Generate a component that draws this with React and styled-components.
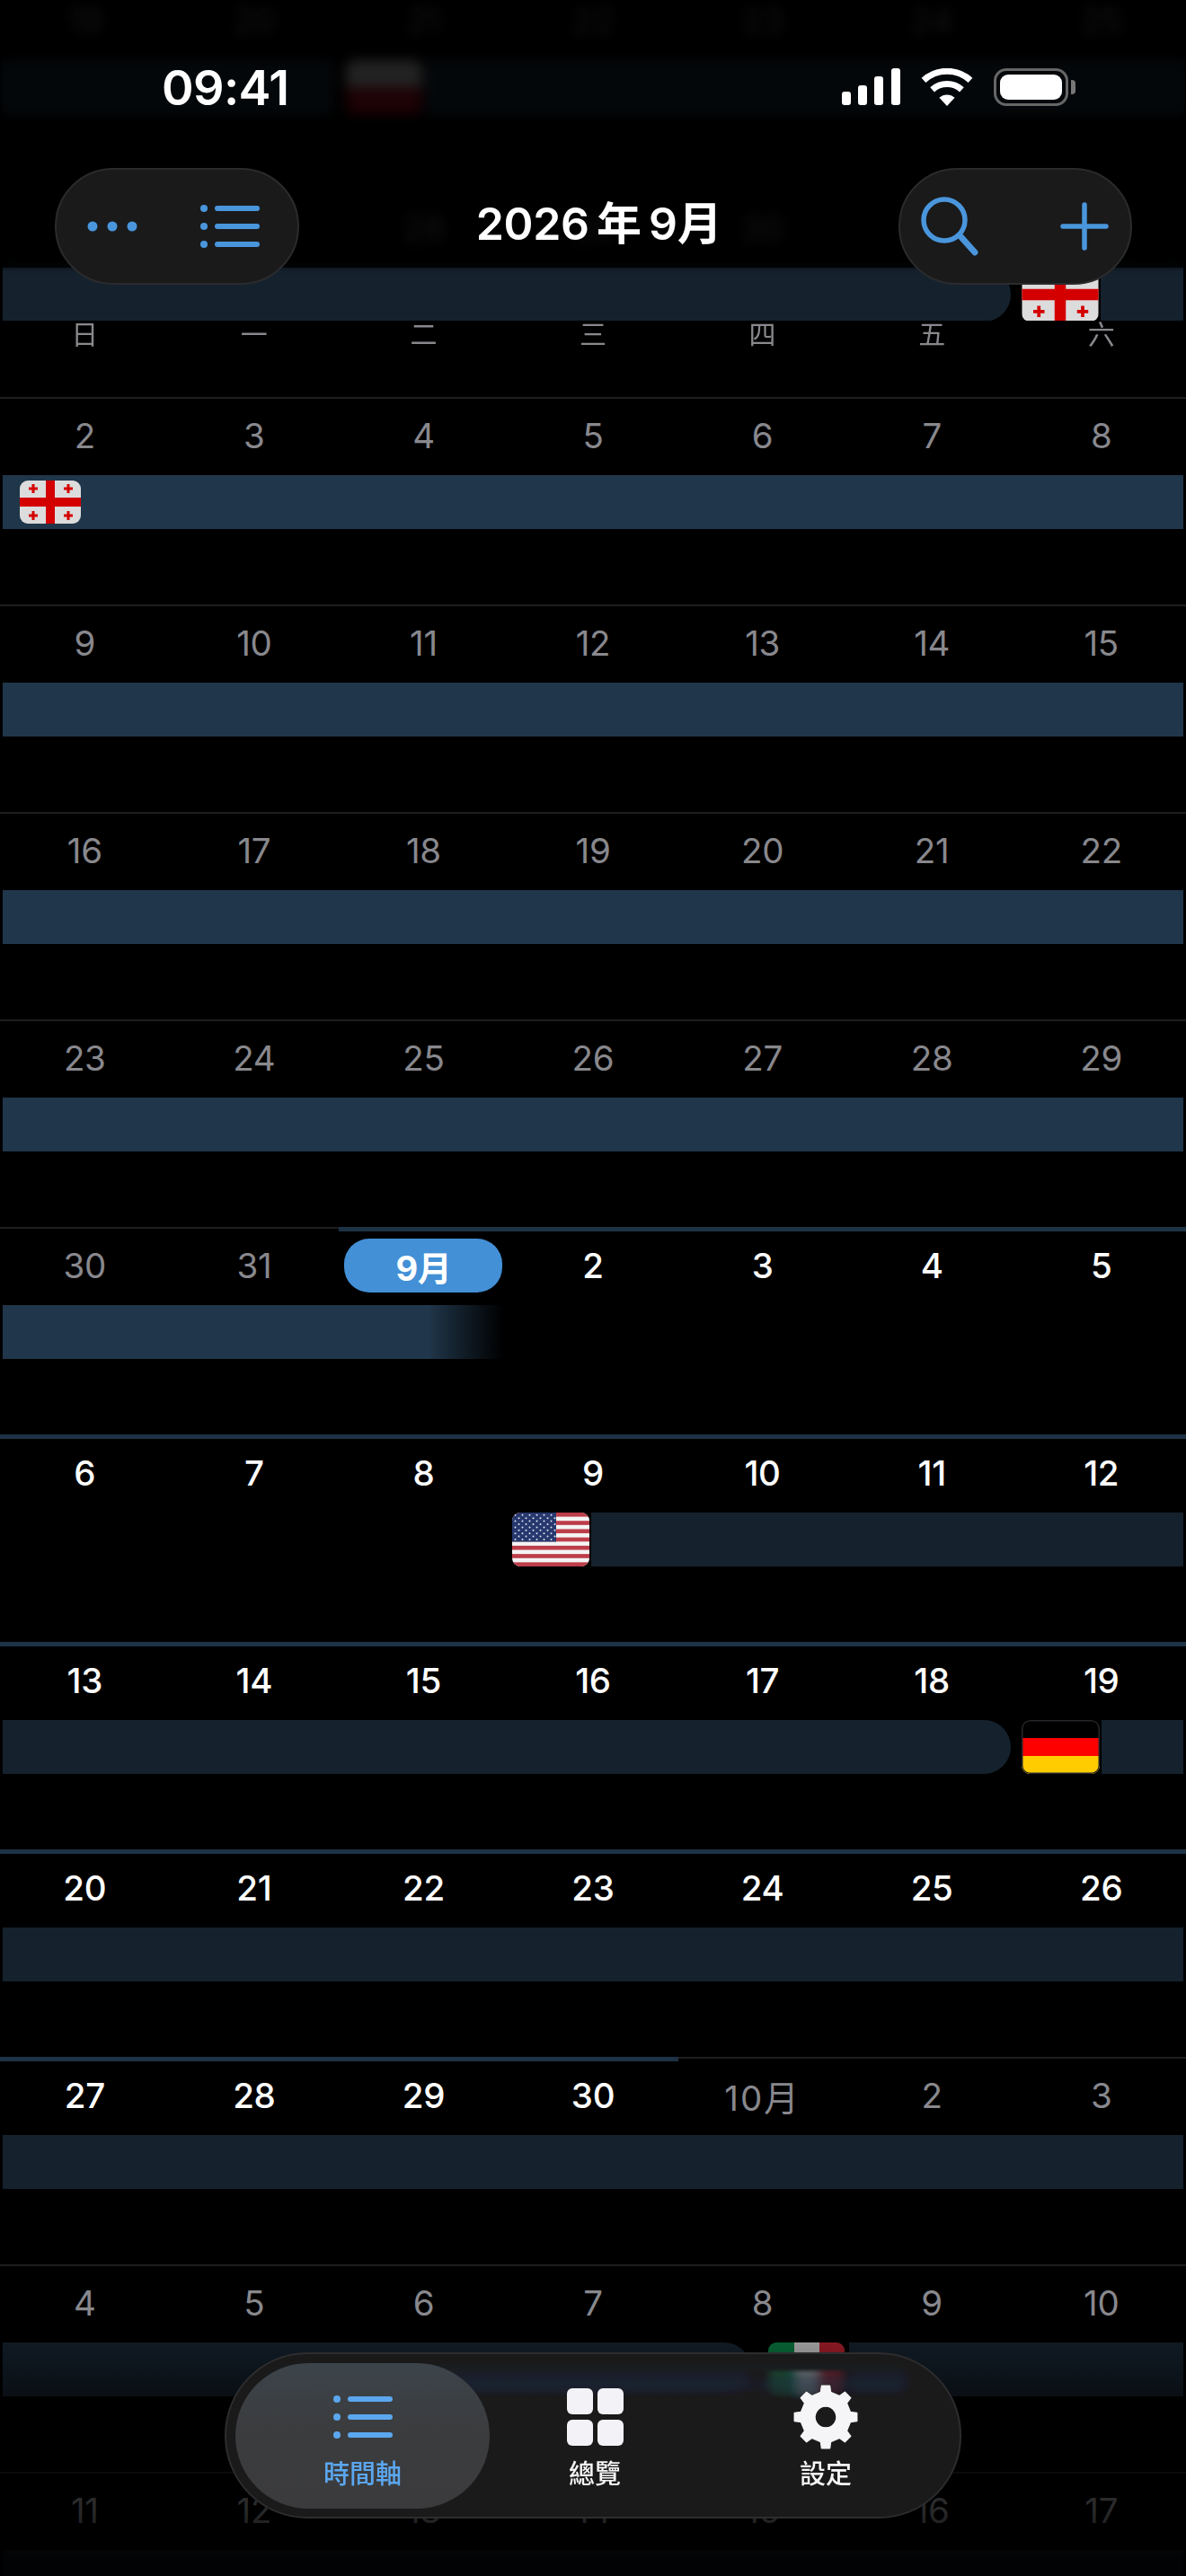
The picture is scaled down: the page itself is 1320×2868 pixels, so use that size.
import React from 'react';
import styled, { createGlobalStyle } from 'styled-components';

const GlobalStyle = createGlobalStyle`
  html, body {
    margin: 0;
    background: #000;
    font-family: Inter, "Noto Sans CJK TC", sans-serif;
  }
`

const Screen = styled.div`
  position: relative;
  width: 1320px;
  height: 2868px;
  overflow: hidden;
  background: #000;
`

const Calendar = styled.div`
  margin-top: -20px;
  padding-top: 0.1px;
`

const Week = styled.div`
  height: 231px;
  box-sizing: border-box;
`

const Rule = styled.div`
  display: flex;
  align-items: flex-start;
  height: 5px;
  margin-bottom: 8px;
`

const RuleSegment = styled.div`
  flex: ${(p) => (p.$width ? `0 0 ${p.$width}px` : '1')};
  height: ${(p) => (p.$month ? '5px' : '2px')};
  background: ${(p) => (p.$month ? '#1d3245' : '#1e1e1e')};
`

const Days = styled.div`
  display: grid;
  grid-template-columns: repeat(7, 1fr);
  height: 60px;
`

const Day = styled.div`
  display: flex;
  align-items: center;
  justify-content: center;
  font-size: 38.5px;
  font-weight: ${(p) => (p.$current ? 500 : 400)};
  letter-spacing: ${(p) => (p.$month ? '2px' : '-0.3px')};
  color: ${(p) => (p.$current ? '#fff' : '#88888d')};
`

const MonthPill = styled.div`
  width: 176px;
  height: 60px;
  border-radius: 28px;
  background: #4390d6;
  color: #fff;
  font-size: 38px;
  font-weight: 700;
  display: flex;
  align-items: center;
  justify-content: center;
`

const Track = styled.div`
  display: flex;
  height: 60px;
  margin-top: 14px;
  padding: 0 3px;
`

const Bar = styled.div`
  display: flex;
  align-items: center;
  box-sizing: border-box;
  height: 60px;
  flex: ${(p) => (p.$width ? `0 0 ${p.$width}px` : '1')};
  margin-left: ${(p) => p.$gap || 0}px;
  padding-left: ${(p) => p.$inset || 0}px;
  background: ${(p) => (p.$past ? '#20364a' : '#15222e')};
  border-radius: ${(p) => (p.$round ? '0 30px 30px 0' : '0')};
`

const FadeBar = styled(Bar)`
  background: linear-gradient(90deg, #20364a 0, #20364a 85%, rgba(32, 54, 74, 0) 100%);
`

const FlagSlot = styled.svg`
  display: block;
  flex: none;
  width: ${(p) => p.$w}px;
  height: ${(p) => p.$h}px;
  margin-left: ${(p) => p.$gap || 0}px;
  border-radius: ${(p) => p.$r || 9}px;
`

const TopBlur = styled.div`
  position: absolute;
  top: 0;
  left: 0;
  right: 0;
  height: 357px;
  backdrop-filter: blur(7px);
  mask-image: linear-gradient(#000 0, #000 280px, transparent 305px);
`

const TopDim = styled.div`
  position: absolute;
  top: 0;
  left: 0;
  right: 0;
  height: 357px;
  background: linear-gradient(rgba(0, 0, 0, 0.86) 0, rgba(0, 0, 0, 0.86) 275px, rgba(0, 0, 0, 0) 302px);
`

const WeekHeader = styled.div`
  position: absolute;
  top: 357px;
  left: 0;
  right: 0;
  height: 85px;
  background: #000;
  display: grid;
  grid-template-columns: repeat(7, 1fr);
`

const WeekLabel = styled.div`
  text-align: center;
  font-size: 30px;
  line-height: 26px;
  color: #88888d;
  font-family: "Noto Sans CJK TC", sans-serif;
`

const TopBar = styled.div`
  position: absolute;
  top: 0;
  left: 0;
  right: 0;
`

const StatusBar = styled.div`
  display: flex;
  align-items: center;
  justify-content: space-between;
  height: 54px;
  margin-top: 70px;
  padding: 0 122px 0 180px;
`

const Clock = styled.div`
  font-size: 54px;
  font-weight: 600;
  color: #fff;
  letter-spacing: -0.6px;
`

const StatusIcons = styled.div`
  display: flex;
  align-items: center;
  gap: 23px;
`

const Battery = styled.div`
  position: relative;
  box-sizing: border-box;
  width: 83px;
  height: 42px;
  padding: 4px;
  border: 3px solid #666;
  border-radius: 14px;
  margin-right: 9px;
  &::after {
    content: '';
    position: absolute;
    top: 10px;
    right: -11px;
    width: 5px;
    height: 16px;
    border-radius: 0 4px 4px 0;
    background: #777;
  }
`

const BatteryFill = styled.div`
  height: 100%;
  border-radius: 9px;
  background: #fff;
`

const Toolbar = styled.div`
  display: flex;
  align-items: center;
  justify-content: space-between;
  height: 130px;
  margin-top: 63px;
  padding: 0 60px 0 61px;
`

const Capsule = styled.div`
  box-sizing: border-box;
  width: ${(p) => p.$w}px;
  height: 130px;
  border-radius: 65px;
  border: 2px solid #2b2b2d;
  background: #1a1a1b;
  display: flex;
  align-items: center;
  justify-content: space-between;
  padding: ${(p) => p.$pad};
`

const Title = styled.div`
  font-size: 50px;
  line-height: 56px;
  margin-top: -6px;
  font-weight: 600;
  color: #fff;
  letter-spacing: -0.3px;
  word-spacing: -4px;
`

const BottomFade = styled.div`
  position: absolute;
  left: 0;
  right: 0;
  top: 2590px;
  height: 278px;
  background: linear-gradient(rgba(0, 0, 0, 0) 0, rgba(0, 0, 0, 0.25) 20px, rgba(0, 0, 0, 0.55) 75px, rgba(0, 0, 0, 0.7) 205px, rgba(0, 0, 0, 0.92) 260px);
`

const NavBlur = styled.div`
  position: absolute;
  left: 250px;
  top: 2619px;
  width: 820px;
  height: 185px;
  border-radius: 92px;
  overflow: hidden;
  backdrop-filter: blur(6px);
  background: linear-gradient(#1a1a1a 0, #1a1a1a 18px, rgba(26, 26, 26, 0) 24px);
  &::after {
    content: '';
    position: absolute;
    top: 22px;
    left: 60px;
    right: 60px;
    height: 28px;
    background: rgba(30, 50, 68, 0.55);
    filter: blur(7px);
  }
`

const Nav = styled.nav`
  position: absolute;
  left: 250px;
  top: 2619px;
  box-sizing: border-box;
  width: 820px;
  height: 185px;
  border-radius: 92px;
  border: 2px solid #2d2d2f;
  background: #1a1a1a;
  mix-blend-mode: lighten;
  display: flex;
  padding: 10px;
`

const Tab = styled.div`
  flex: 0 0 ${(p) => p.$w}px;
  height: 162px;
  box-sizing: border-box;
  padding-top: 24px;
  border-radius: 81px;
  display: flex;
  flex-direction: column;
  align-items: center;
  background: ${(p) => (p.$active ? 'linear-gradient(#3c444b 0, #3b3c3e 45%, #3b3b3d 100%)' : 'transparent')};
`

const TabIcon = styled.div`
  height: 72px;
  display: flex;
  align-items: center;
  justify-content: center;
`

const TabLabel = styled.div`
  margin-top: 7px;
  font-size: 29px;
  line-height: 36px;
  font-weight: 500;
  font-family: "Noto Sans CJK TC", sans-serif;
  color: ${(p) => (p.$active ? '#5ba7ef' : '#f5f5f7')};
`

const BLUE = '#4a96dc'

const Signal = () => (
  <svg width="65" height="42" viewBox="0 0 65 42">
    <rect x="0" y="26" width="10" height="15" rx="3" fill="#fff" />
    <rect x="18" y="19" width="10" height="22" rx="3" fill="#fff" />
    <rect x="36" y="9" width="10" height="32" rx="3" fill="#fff" />
    <rect x="55" y="0" width="10" height="41" rx="3" fill="#fff" />
  </svg>
)

const Wifi = () => (
  <svg width="58" height="42" viewBox="0 0 58 42">
    <path d="M3 13.4A38.5 38.5 0 0 1 55 13.4" fill="none" stroke="#fff" strokeWidth="7" />
    <path d="M12.6 23.8A24.5 24.5 0 0 1 45.4 23.8" fill="none" stroke="#fff" strokeWidth="7" />
    <path d="M29 42L20.4 32.8A12.6 12.6 0 0 1 37.6 32.8Z" fill="#fff" />
  </svg>
)

const Dots = () => (
  <svg width="56" height="12" viewBox="0 0 56 12">
    <circle cx="6" cy="6" r="5.5" fill={BLUE} />
    <circle cx="28" cy="6" r="5.5" fill={BLUE} />
    <circle cx="50" cy="6" r="5.5" fill={BLUE} />
  </svg>
)

const ListIcon = ({ color, w = 66 }) => (
  <svg width={w} height="50" viewBox="0 0 66 50">
    {[5, 25, 45].map((y) => (
      <g key={y}>
        <circle cx="4" cy={y} r="4" fill={color} />
        <rect x="16" y={y - 3} width="50" height="6" rx="3" fill={color} />
      </g>
    ))}
  </svg>
)

const SearchIcon = () => (
  <svg width="64" height="66" viewBox="0 0 64 66" fill="none" stroke={BLUE} strokeWidth="5.5" strokeLinecap="round">
    <circle cx="26" cy="26" r="23" />
    <path d="M43 43L60 62" strokeWidth="7" />
  </svg>
)

const PlusIcon = () => (
  <svg width="54" height="54" viewBox="0 0 54 54" stroke={BLUE} strokeWidth="5.5" strokeLinecap="round">
    <path d="M27 3V51M3 27H51" />
  </svg>
)

const GridIcon = () => (
  <svg width="63" height="64" viewBox="0 0 63 64" fill="#f2f2f7">
    <rect x="0" y="0" width="29" height="29" rx="6" />
    <rect x="34" y="0" width="29" height="29" rx="6" />
    <rect x="0" y="35" width="29" height="29" rx="6" />
    <rect x="34" y="35" width="29" height="29" rx="6" />
  </svg>
)

// 8 tooth gear, outline worked out once from the radii
const gearPath = (() => {
  const pts = []
  for (let i = 0; i < 8; i++) {
    const a = (i * Math.PI) / 4 - Math.PI / 2
    const at = (r, d) => `${(36 + r * Math.cos(a + d)).toFixed(2)} ${(36 + r * Math.sin(a + d)).toFixed(2)}`
    pts.push(at(28, -0.2), at(35, -0.13), at(35, 0.13), at(28, 0.2))
  }
  return `M${pts.join('L')}Z M36 24a12 12 0 1 0 0.01 0Z`
})()

const GearIcon = () => (
  <svg width="72" height="72" viewBox="0 0 72 72">
    <path d={gearPath} fill="#f5f5f7" fillRule="evenodd" stroke="#f5f5f7" strokeWidth="1.5" strokeLinejoin="round" />
  </svg>
)

const Georgia = ({ w = 68, h = 48, gap, r }) => (
  <FlagSlot $w={w} $h={h} $gap={gap} $r={r} viewBox="0 0 68 48">
    <rect width="68" height="48" fill="#dcdcdc" />
    <rect x="29" width="10" height="48" fill="#d40000" />
    <rect y="19" width="68" height="10" fill="#d40000" />
    {[[15, 9], [54, 9], [15, 39], [54, 39]].map(([x, y]) => (
      <path key={x + '-' + y} d={`M${x} ${y - 5}V${y + 5}M${x - 5} ${y}H${x + 5}`} stroke="#d40000" strokeWidth="3" />
    ))}
  </FlagSlot>
)

const Usa = ({ gap }) => (
  <FlagSlot $w={86} $h={60} $gap={gap} viewBox="0 0 86 60">
    <rect width="86" height="60" fill="#f4f4f4" />
    {[0, 2, 4, 6, 8, 10, 12].map((i) => (
      <rect key={i} y={(i * 60) / 13} width="86" height={60 / 13} fill="#bd3d4a" />
    ))}
    <rect width="49" height="32.5" fill="#26386e" />
    {[0, 1, 2, 3, 4, 5, 6, 7, 8].map((row) =>
      [0, 1, 2, 3, 4, 5].map((col) => (
        <circle key={row + '-' + col} cx={3.5 + col * 8 + (row % 2 ? 4 : 0)} cy={2.8 + row * 3.4} r="1" fill="#dfe3ee" />
      ))
    )}
  </FlagSlot>
)

const Germany = ({ gap }) => (
  <FlagSlot $w={87} $h={60} $gap={gap} viewBox="0 0 87 60">
    <rect width="87" height="20" fill="#000" />
    <rect y="20" width="87" height="20" fill="#f00" />
    <rect y="40" width="87" height="20" fill="#fc0" />
    <rect x="0.75" y="0.75" width="85.5" height="58.5" rx="8.5" fill="none" stroke="#26262a" strokeWidth="1.5" />
  </FlagSlot>
)

const Italy = ({ gap }) => (
  <FlagSlot $w={85} $h={60} $gap={gap} viewBox="0 0 85 60">
    <rect width="29" height="60" fill="#0a7a40" />
    <rect x="29" width="28" height="60" fill="#c8c8c8" />
    <rect x="57" width="28" height="60" fill="#b0202c" />
  </FlagSlot>
)

const Poland = ({ gap }) => (
  <FlagSlot $w={85} $h={60} $gap={gap} viewBox="0 0 85 60">
    <rect width="85" height="30" fill="#f2f2f2" />
    <rect y="30" width="85" height="30" fill="#d0102c" />
  </FlagSlot>
)

const weeks = [
  { days: [19, 20, 21, 22, 23, 24, 25], track: <><Bar $past $width={368} /><Poland gap={14} /><Bar $past $gap={3} /></> },
  { days: [26, 27, 28, 29, 30, 31, '8月'], track: <><Bar $round $width={1122} /><Georgia w={86} h={60} gap={12} /><Bar $gap={2} /></> },
  { days: [2, 3, 4, 5, 6, 7, 8], track: <Bar $past $inset={19}><Georgia /></Bar> },
  { days: [9, 10, 11, 12, 13, 14, 15], track: <Bar $past /> },
  { days: [16, 17, 18, 19, 20, 21, 22], track: <Bar $past /> },
  { days: [23, 24, 25, 26, 27, 28, 29], track: <Bar $past /> },
  {
    days: [30, 31, '9月', 2, 3, 4, 5],
    current: [3, 4, 5, 6],
    rule: [{ width: 377 }, { month: true }],
    track: <FadeBar $width={557} />,
  },
  {
    days: [6, 7, 8, 9, 10, 11, 12],
    current: [0, 1, 2, 3, 4, 5, 6],
    rule: [{ month: true }],
    track: <><Usa gap={567} /><Bar $gap={2} /></>,
  },
  {
    days: [13, 14, 15, 16, 17, 18, 19],
    current: [0, 1, 2, 3, 4, 5, 6],
    rule: [{ month: true }],
    track: <><Bar $round $width={1122} /><Germany gap={12} /><Bar $gap={2} /></>,
  },
  {
    days: [20, 21, 22, 23, 24, 25, 26],
    current: [0, 1, 2, 3, 4, 5, 6],
    rule: [{ month: true }],
    track: <Bar />,
  },
  {
    days: [27, 28, 29, 30, '10月', 2, 3],
    current: [0, 1, 2, 3],
    rule: [{ month: true, width: 755 }, {}],
    track: <Bar />,
  },
  { days: [4, 5, 6, 7, 8, 9, 10], track: <><Bar $round $width={833} /><Italy gap={19} /><Bar $gap={5} /></> },
  { days: [11, 12, 13, 14, 15, 16, 17], track: <Bar /> },
]

const App = () => {
  return (
    <Screen>
      <GlobalStyle />
      <Calendar>
        {weeks.map((week) => (
          <Week key={week.days[0]}>
            <Rule>
              {(week.rule || [{}]).map((seg, i) => (
                <RuleSegment key={i} $width={seg.width} $month={seg.month} />
              ))}
            </Rule>
            <Days>
              {week.days.map((d, i) =>
                d === '9月' ? (
                  <Day key={i}><MonthPill>{d}</MonthPill></Day>
                ) : (
                  <Day key={i} $month={typeof d === 'string'} $current={week.current && week.current.includes(i)}>{d}</Day>
                )
              )}
            </Days>
            <Track>{week.track}</Track>
          </Week>
        ))}
      </Calendar>

      <TopBlur />
      <TopDim />
      <WeekHeader>
        {['日', '一', '二', '三', '四', '五', '六'].map((w) => (
          <WeekLabel key={w}>{w}</WeekLabel>
        ))}
      </WeekHeader>

      <TopBar>
        <StatusBar>
          <Clock>09:41</Clock>
          <StatusIcons>
            <Signal />
            <Wifi />
            <Battery><BatteryFill /></Battery>
          </StatusIcons>
        </StatusBar>
        <Toolbar>
          <Capsule $w={272} $pad="0 42px 0 34px">
            <Dots />
            <ListIcon color={BLUE} />
          </Capsule>
          <Title>2026 年 9月</Title>
          <Capsule $w={260} $pad="0 24px 0 23px">
            <SearchIcon />
            <PlusIcon />
          </Capsule>
        </Toolbar>
      </TopBar>

      <BottomFade />
      <NavBlur />
      <Nav>
        <Tab $active $w={283}>
          <TabIcon><ListIcon color="#5ba7ef" w={70} /></TabIcon>
          <TabLabel $active>時間軸</TabLabel>
        </Tab>
        <Tab $w={234}>
          <TabIcon><GridIcon /></TabIcon>
          <TabLabel>總覽</TabLabel>
        </Tab>
        <Tab $w={280}>
          <TabIcon><GearIcon /></TabIcon>
          <TabLabel>設定</TabLabel>
        </Tab>
      </Nav>
    </Screen>
  );
}

export default App;
